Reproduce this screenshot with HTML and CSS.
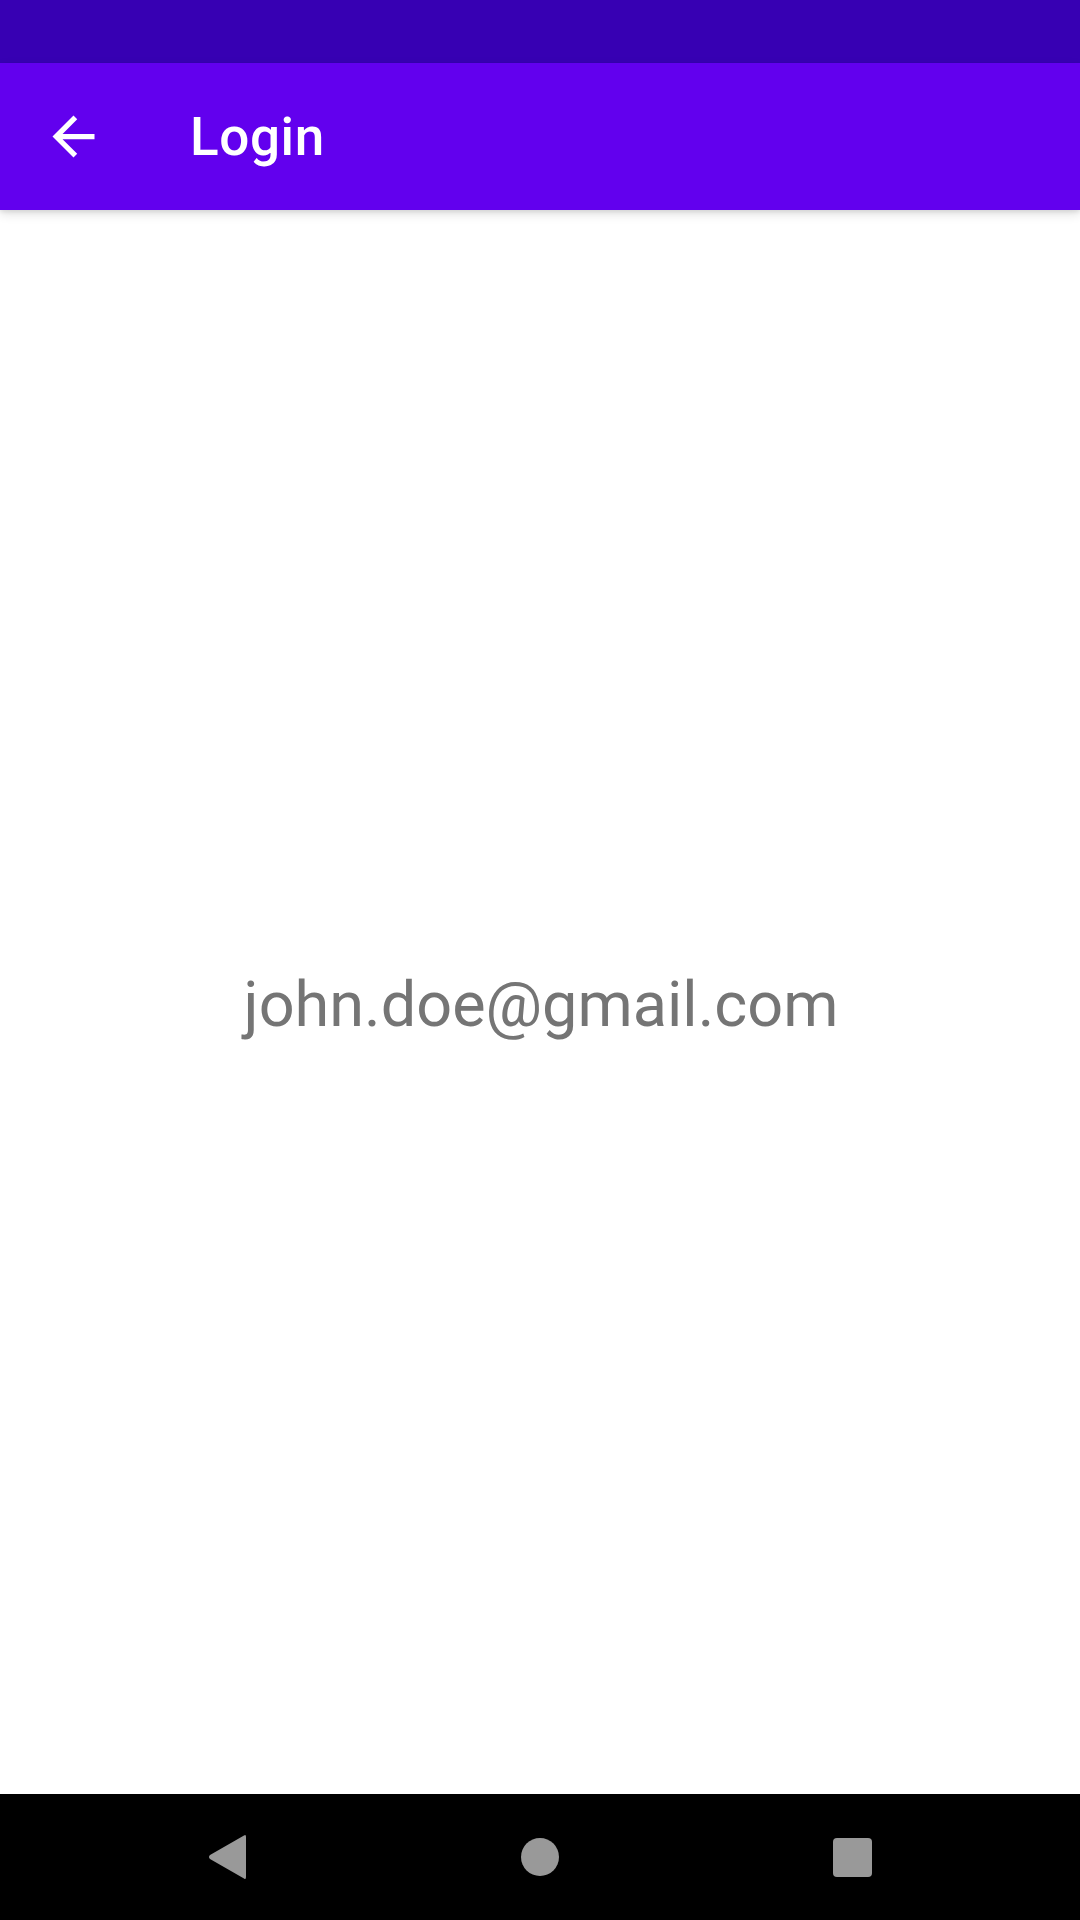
FILE: index.html
```html
<!DOCTYPE html>
<html>
<head>
<meta charset="utf-8">
<link rel="stylesheet" href="styles.css">
</head>
<body>
<div class="screen">
  <div class="status-bar"></div>
  <header class="app-bar">
    <div class="nav-icon">
      <svg viewBox="0 0 24 24" width="63" height="63"><path fill="#fff" d="M20 11H7.83l5.59-5.59L12 4l-8 8 8 8 1.41-1.41L7.83 13H20v-2z"/></svg>
    </div>
    <h1 class="title">Login</h1>
  </header>
  <main class="content">
    <p class="email">john.doe@gmail.com</p>
  </main>
  <nav class="sys-nav">
    <div class="sys-btn">
      <svg viewBox="0 0 40 46" width="40" height="46"><path fill="#999" d="M38 3 Q38 0 36 1.5 L2 21 Q0 23 2 25 L36 44.5 Q38 46 38 43 Z"/></svg>
    </div>
    <div class="sys-btn"><span class="home"></span></div>
    <div class="sys-btn"><span class="recents"></span></div>
  </nav>
</div>
</body>
</html>
```
FILE: styles.css
```css
html, body {
  margin: 0;
  padding: 0;
  background: #fff;
}
.screen {
  width: 1080px;
  height: 1920px;
  display: flex;
  flex-direction: column;
  font-family: Roboto, "Liberation Sans", sans-serif;
}
.status-bar {
  height: 63px;
  background: #3700b3;
  flex: none;
}
.app-bar {
  height: 147px;
  background: #6200ee;
  flex: none;
  display: flex;
  align-items: center;
  position: relative;
  z-index: 1;
  box-shadow: 0 4px 10px rgba(0,0,0,0.12), 0 2px 4px rgba(0,0,0,0.08);
}
.nav-icon {
  width: 63px;
  height: 63px;
  margin-left: 42px;
  display: flex;
}
.title {
  margin: 0 0 0 85px;
  color: #fff;
  font-size: 53px;
  font-weight: 500;
  letter-spacing: 0.6px;
}
.content {
  flex: 1;
  display: flex;
  align-items: center;
  justify-content: center;
  padding-top: 5px;
  padding-left: 2px;
}
.email {
  margin: 0;
  font-size: 63px;
  color: #757575;
}
.sys-nav {
  height: 126px;
  background: #000;
  flex: none;
  display: flex;
  justify-content: center;
  align-items: center;
  gap: 96px;
}
.sys-btn {
  width: 216px;
  height: 126px;
  display: flex;
  align-items: center;
  justify-content: center;
}
.home {
  width: 38px;
  height: 38px;
  border-radius: 50%;
  background: #999;
}
.recents {
  width: 39px;
  height: 39px;
  border-radius: 4px;
  background: #999;
}
```
